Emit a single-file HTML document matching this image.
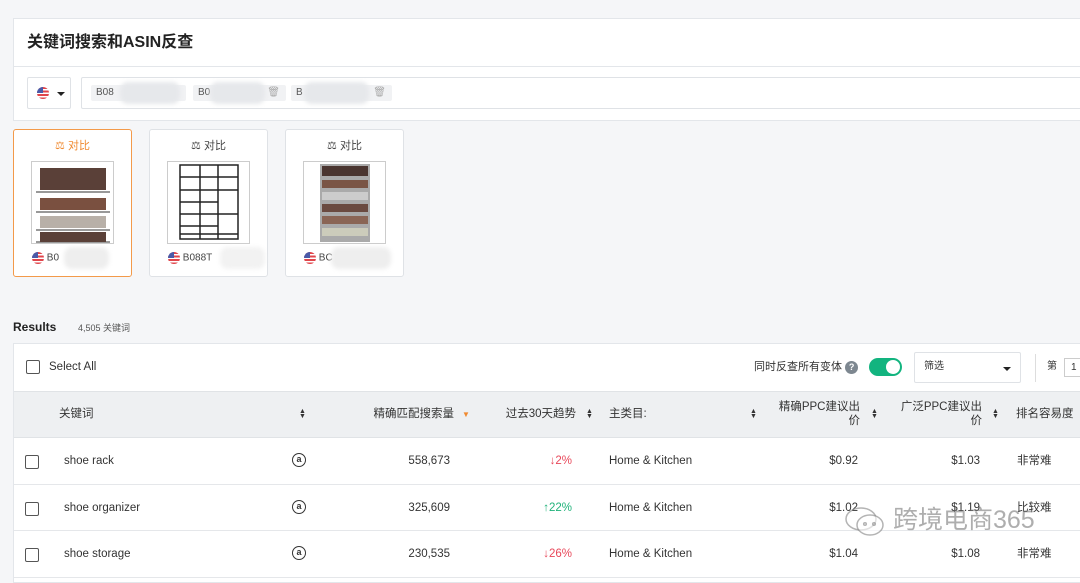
<!DOCTYPE html>
<html><head><meta charset="utf-8"><style>
*{box-sizing:border-box;margin:0;padding:0}
body{width:1080px;height:571px;overflow:hidden;background:#f5f6f8;font-family:"Liberation Sans","Noto Sans CJK SC",sans-serif;color:#333;position:relative}
.abs{position:absolute}
.panel{position:absolute;left:13px;top:18px;width:1080px;height:103px;background:#fff;border:1px solid #e3e6ea}
.title{position:absolute;left:13px;top:13px;font-size:16px;line-height:20px;font-weight:bold;color:#222}
.div{position:absolute;left:0;right:0;top:47px;border-top:1px solid #e3e6ea}
.sel{position:absolute;left:13px;top:58px;width:44px;height:32px;border:1px solid #dfe2e6;border-radius:2px}
.inp{position:absolute;left:67px;top:58px;width:1010px;height:32px;border:1px solid #dfe2e6;border-radius:2px}
.tag{position:absolute;top:7px;height:16px;background:#f1f2f4;font-size:10px;line-height:12px;color:#555;padding:2px 5px;border-radius:2px}
.blur{position:absolute;background:#e6e8eb;border-radius:8px;filter:blur(2px)}
.flag{display:inline-block;width:12px;height:12px;border-radius:50%;background:repeating-linear-gradient(#e0454b 0 2px,#fff 2px 3.5px);position:relative;overflow:hidden;vertical-align:middle}
.flag:after{content:"";position:absolute;left:0;top:0;width:6px;height:6px;background:#4a5aa8}
.card{position:absolute;top:129px;width:119px;height:148px;background:#fff;border:1px solid #dfe2e6;border-radius:3px}
.card .cmp{position:absolute;top:9px;width:100%;text-align:center;font-size:11px;line-height:14px;color:#444}
.card .img{position:absolute;left:17px;top:31px;width:83px;height:83px;border:1px solid #ccc;background:#fff;overflow:hidden}
.card .id{position:absolute;left:18px;top:122px;font-size:10px;line-height:12px;color:#444}
.tbl{position:absolute;left:13px;top:343px;width:1080px;height:240px;background:#fff;border:1px solid #e3e6ea}
.cb{position:absolute;width:14px;height:14px;border:1.3px solid #555;border-radius:2px;background:#fff}
.hdr{position:absolute;left:0;top:47px;width:100%;height:47px;background:#eef0f2;border-top:1px solid #e0e3e6;border-bottom:1px solid #e0e3e6}
.t{position:absolute;font-size:11.5px;line-height:14px;color:#333;white-space:nowrap}
.r{text-align:right}
.row{position:absolute;left:0;width:100%;border-bottom:1px solid #e5e7ea}
.srt{position:absolute;font-size:7px;line-height:5px;color:#333}
.amz{position:absolute;width:14px;height:14px;border:1.3px solid #333;border-radius:50%;font-size:9px;line-height:11px;text-align:center;font-weight:bold}
</style></head><body>
<div class="panel">
 <div class="title" style="top:14px">关键词搜索和ASIN反查</div>
 <div class="div"></div>
 <div class="sel"><span class="flag" style="position:absolute;left:9px;top:9px"></span><span class="abs" style="left:29px;top:14px;border:4px solid transparent;border-top:4px solid #222;border-bottom:0"></span></div>
 <div class="inp">
  <div class="tag" style="left:9px;width:95px">B08</div><div class="blur" style="left:38px;top:4px;width:60px;height:22px"></div>
  <div class="tag" style="left:111px;width:93px">B0 <span style="position:absolute;right:6px;color:#aaa">🗑</span></div><div class="blur" style="left:128px;top:4px;width:55px;height:22px"></div>
  <div class="tag" style="left:209px;width:101px">B <span style="position:absolute;right:6px;color:#aaa">🗑</span></div><div class="blur" style="left:222px;top:4px;width:65px;height:22px"></div>
 </div>
</div>

<div class="card" style="left:13px;border-color:#f39a4a"><div class="cmp" style="color:#f08a30">⚖ 对比</div><div class="img"><svg width="82" height="82"><g stroke="#999" stroke-width="2"><line x1="4" y1="30" x2="78" y2="30"/><line x1="4" y1="50" x2="78" y2="50"/><line x1="4" y1="68" x2="78" y2="68"/><line x1="4" y1="80" x2="78" y2="80"/></g><g fill="#5a4038"><rect x="8" y="6" width="66" height="22"/><rect x="8" y="36" width="66" height="12" fill="#7a5040"/><rect x="8" y="54" width="66" height="12" fill="#b8b0a8"/><rect x="8" y="70" width="66" height="10"/></g></svg></div><div class="id"><span class="flag"></span> B0</div><div class="blur" style="left:50px;top:117px;width:45px;height:22px;background:#eee"></div></div>
<div class="card" style="left:149px"><div class="cmp">⚖ 对比</div><div class="img"><svg width="82" height="82" stroke="#222" stroke-width="1.5" fill="none"><rect x="12" y="3" width="58" height="74"/><line x1="32" y1="3" x2="32" y2="77"/><line x1="50" y1="3" x2="50" y2="77"/><line x1="12" y1="15" x2="70" y2="15"/><line x1="12" y1="28" x2="70" y2="28"/><line x1="12" y1="40" x2="50" y2="40"/><line x1="12" y1="52" x2="70" y2="52"/><line x1="12" y1="64" x2="50" y2="64"/><line x1="12" y1="72" x2="70" y2="72"/></svg></div><div class="id"><span class="flag"></span> B088T</div><div class="blur" style="left:70px;top:117px;width:45px;height:22px;background:#f2f2f2"></div></div>
<div class="card" style="left:285px"><div class="cmp">⚖ 对比</div><div class="img"><svg width="82" height="82"><rect x="16" y="2" width="50" height="78" fill="#aaa"/><rect x="18" y="4" width="46" height="10" fill="#4a3530"/><rect x="18" y="18" width="46" height="8" fill="#7a5545"/><rect x="18" y="30" width="46" height="8" fill="#ccc"/><rect x="18" y="42" width="46" height="8" fill="#6a4a40"/><rect x="18" y="54" width="46" height="8" fill="#8a6555"/><rect x="18" y="66" width="46" height="8" fill="#ccb"/></svg></div><div class="id"><span class="flag"></span> BC</div><div class="blur" style="left:45px;top:117px;width:60px;height:22px;background:#eee"></div></div>

<div class="t" style="left:13px;top:320px;font-size:12px;font-weight:bold;color:#222">Results</div>
<div class="t" style="left:78px;top:321px;font-size:9px;color:#555">4,505 关键词</div>

<div class="tbl">
 <div class="cb" style="left:12px;top:16px"></div>
 <div class="t" style="left:35px;top:16px">Select All</div>
 <div class="t" style="left:740px;top:16px;font-size:11px">同时反查所有变体 <span style="display:inline-block;width:13px;height:13px;border-radius:50%;background:#7d8790;color:#fff;font-size:9px;text-align:center;line-height:13px;font-weight:bold;vertical-align:middle">?</span></div>
 <div class="abs" style="left:855px;top:14px;width:33px;height:18px;border-radius:9px;background:#12b47f"><div class="abs" style="right:2px;top:2px;width:14px;height:14px;border-radius:50%;background:#fff"></div></div>
 <div class="abs" style="left:900px;top:8px;width:107px;height:31px;border:1px solid #dfe2e6;border-radius:2px"><span class="t" style="left:9px;top:7px;font-size:10px">筛选</span><span class="abs" style="left:88px;top:14px;border:4px solid transparent;border-top:4px solid #222;border-bottom:0"></span></div>
 <div class="abs" style="left:1021px;top:10px;height:28px;border-left:1px solid #ddd"></div>
 <div class="t" style="left:1033px;top:16px;font-size:10px">第</div>
 <div class="abs" style="left:1050px;top:14px;width:30px;height:19px;border:1px solid #ccc;font-size:10px;padding:3px 6px">1</div>

 <div class="hdr">
  <div class="t" style="left:45px;top:15px">关键词</div><div class="srt" style="left:285px;top:17px">▲<br>▼</div>
  <div class="t r" style="left:330px;width:110px;top:15px">精确匹配搜索量</div><div class="t" style="left:448px;top:16px;color:#f08a30;font-size:8px">▼</div>
  <div class="t r" style="left:470px;width:92px;top:15px">过去30天趋势</div><div class="srt" style="left:572px;top:17px">▲<br>▼</div>
  <div class="t" style="left:595px;top:15px">主类目:</div><div class="srt" style="left:736px;top:17px">▲<br>▼</div>
  <div class="t r" style="left:750px;width:96px;top:8px">精确PPC建议出<br>价</div><div class="srt" style="left:857px;top:17px">▲<br>▼</div>
  <div class="t r" style="left:870px;width:98px;top:8px">广泛PPC建议出<br>价</div><div class="srt" style="left:978px;top:17px">▲<br>▼</div>
  <div class="t" style="left:1002px;top:15px">排名容易度</div>
 </div>

 <div class="row" style="top:94px;height:47px">
  <div class="cb" style="left:11px;top:17px"></div><div class="t" style="left:50px;top:16px">shoe rack</div><div class="amz" style="left:278px;top:15px">a</div>
  <div class="t r" style="left:336px;width:100px;top:16px">558,673</div><div class="t r" style="left:458px;width:100px;top:16px;color:#e8485a">↓2%</div>
  <div class="t" style="left:595px;top:16px">Home &amp; Kitchen</div><div class="t r" style="left:744px;width:100px;top:16px">$0.92</div><div class="t r" style="left:866px;width:100px;top:16px">$1.03</div><div class="t" style="left:1003px;top:16px">非常难</div>
 </div>
 <div class="row" style="top:141px;height:46px">
  <div class="cb" style="left:11px;top:17px"></div><div class="t" style="left:50px;top:16px">shoe organizer</div><div class="amz" style="left:278px;top:15px">a</div>
  <div class="t r" style="left:336px;width:100px;top:16px">325,609</div><div class="t r" style="left:458px;width:100px;top:16px;color:#20b27a">↑22%</div>
  <div class="t" style="left:595px;top:16px">Home &amp; Kitchen</div><div class="t r" style="left:744px;width:100px;top:16px">$1.02</div><div class="t r" style="left:866px;width:100px;top:16px">$1.19</div><div class="t" style="left:1003px;top:16px">比较难</div>
 </div>
 <div class="row" style="top:187px;height:47px">
  <div class="cb" style="left:11px;top:17px"></div><div class="t" style="left:50px;top:16px">shoe storage</div><div class="amz" style="left:278px;top:15px">a</div>
  <div class="t r" style="left:336px;width:100px;top:16px">230,535</div><div class="t r" style="left:458px;width:100px;top:16px;color:#e8485a">↓26%</div>
  <div class="t" style="left:595px;top:16px">Home &amp; Kitchen</div><div class="t r" style="left:744px;width:100px;top:16px">$1.04</div><div class="t r" style="left:866px;width:100px;top:16px">$1.08</div><div class="t" style="left:1003px;top:16px">非常难</div>
 </div>
</div>
<svg class="abs" style="left:843px;top:505px" width="44" height="34" fill="none" stroke="rgba(130,130,130,.6)" stroke-width="1.5"><ellipse cx="18" cy="14" rx="15" ry="11"/><ellipse cx="27" cy="20" rx="13" ry="10" fill="rgba(255,255,255,.6)"/><circle cx="22" cy="19" r="1.3"/><circle cx="31" cy="19" r="1.3"/></svg>
<div class="t" style="left:893px;top:505px;font-size:25px;line-height:30px;color:rgba(120,120,120,.6)">跨境电商365</div>
</body></html>
